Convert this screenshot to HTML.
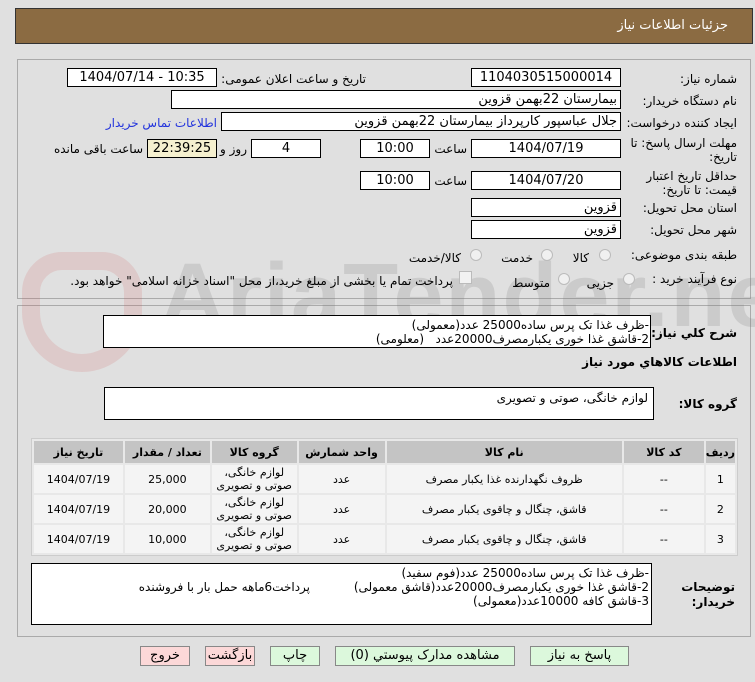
<!DOCTYPE html>
<html><head><meta charset="utf-8"><style>
*{box-sizing:border-box;margin:0;padding:0}
body{width:755px;height:682px;background:#e0e0e0;font-family:"DejaVu Sans","Liberation Sans",sans-serif;font-size:12px;color:#000;position:relative;overflow:hidden}
.a{position:absolute;white-space:nowrap}
.f{position:absolute;background:#fff;border:1px solid #000;height:19px;line-height:17px;text-align:center;font-size:13px}
.fr{text-align:right;padding-right:3px}
.l{position:absolute;white-space:nowrap;direction:rtl;text-align:right}
.rad{position:absolute;width:12px;height:12px;border-radius:50%;border:1px solid #bbb;background:#f0f0f0}
table{position:absolute;border-collapse:separate;border-spacing:2px;background:#e8e8e8;border:1px solid #ccc}
td{background:#f4f4f4;text-align:center;font-size:11px;direction:rtl;height:28px}
th{background:#c4c4c4;font-size:11px;height:22px;direction:rtl}
.btn{position:absolute;top:646px;height:20px;border:1px solid #888;font-size:13px;text-align:center;line-height:18px;direction:rtl}
</style></head><body>
<div class="a" style="left:15px;top:8px;width:738px;height:36px;background:#8b6b42;border:1px solid #333"></div>
<div class="l" style="right:27px;top:18px;color:#fff;font-size:13px">جزئیات اطلاعات نیاز</div>
<div class="a" style="left:17px;top:59px;width:734px;height:240px;border:1px solid #aaa"></div>
<div class="a" style="left:17px;top:305px;width:734px;height:332px;border:1px solid #aaa"></div>
<div class="a" style="left:160px;top:245px;font-size:90px;font-weight:bold;color:rgba(120,120,120,.2);font-family:'Liberation Sans',sans-serif;letter-spacing:2px">AriaTender.net</div>
<div class="a" style="left:22px;top:252px;width:120px;height:120px;border:18px solid rgba(210,80,80,.15);border-radius:40px 40px 60px 60px"></div>

<div class="l" style="right:18px;top:72px">شماره نیاز:</div>
<div class="f" style="left:471px;top:68px;width:150px">1104030515000014</div>
<div class="l" style="right:389px;top:72px">تاریخ و ساعت اعلان عمومی:</div>
<div class="f" style="left:67px;top:68px;width:150px">1404/07/14 - 10:35</div>
<div class="l" style="right:18px;top:94px">نام دستگاه خریدار:</div>
<div class="f fr" style="left:171px;top:90px;width:450px;direction:rtl">بیمارستان 22بهمن قزوین</div>
<div class="l" style="right:18px;top:116px">ایجاد کننده درخواست:</div>
<div class="f fr" style="left:221px;top:112px;width:400px;direction:rtl">جلال عباسپور کارپرداز بیمارستان 22بهمن قزوین</div>
<div class="l" style="right:538px;top:116px;color:#2233dd">اطلاعات تماس خریدار</div>
<div class="l" style="right:18px;top:136px;line-height:14px">مهلت ارسال پاسخ: تا<br>تاریخ:</div>
<div class="f" style="left:471px;top:139px;width:150px">1404/07/19</div>
<div class="l" style="right:288px;top:142px">ساعت</div>
<div class="f" style="left:360px;top:139px;width:70px">10:00</div>
<div class="f" style="left:251px;top:139px;width:70px">4</div>
<div class="l" style="right:508px;top:142px">روز و</div>
<div class="f" style="left:147px;top:139px;width:70px;background:#f5f0cf">22:39:25</div>
<div class="l" style="right:612px;top:142px">ساعت باقی مانده</div>
<div class="l" style="right:18px;top:169px;line-height:14px">حداقل تاریخ اعتبار<br>قیمت: تا تاریخ:</div>
<div class="f" style="left:471px;top:171px;width:150px">1404/07/20</div>
<div class="l" style="right:288px;top:174px">ساعت</div>
<div class="f" style="left:360px;top:171px;width:70px">10:00</div>
<div class="l" style="right:18px;top:201px">استان محل تحویل:</div>
<div class="f fr" style="left:471px;top:198px;width:150px;direction:rtl">قزوین</div>
<div class="l" style="right:18px;top:223px">شهر محل تحویل:</div>
<div class="f fr" style="left:471px;top:220px;width:150px;direction:rtl">قزوین</div>
<div class="l" style="right:18px;top:248px">طبقه بندی موضوعی:</div>
<div class="rad" style="left:599px;top:249px"></div><div class="l" style="right:166px;top:251px">کالا</div>
<div class="rad" style="left:541px;top:249px"></div><div class="l" style="right:222px;top:251px">خدمت</div>
<div class="rad" style="left:470px;top:249px"></div><div class="l" style="right:294px;top:251px">کالا/خدمت</div>
<div class="l" style="right:18px;top:272px">نوع فرآیند خرید :</div>
<div class="rad" style="left:623px;top:273px"></div><div class="l" style="right:141px;top:276px">جزیی</div>
<div class="rad" style="left:558px;top:273px"></div><div class="l" style="right:205px;top:276px">متوسط</div>
<div class="a" style="left:459px;top:271px;width:13px;height:13px;border:1px solid #bbb;background:#f2f2f2"></div>
<div class="l" style="right:302px;top:274px">پرداخت تمام یا بخشی از مبلغ خرید،از محل "اسناد خزانه اسلامی" خواهد بود.</div>

<div class="l" style="right:18px;top:326px;font-weight:bold">شرح کلي نیاز:</div>
<div class="a" style="left:103px;top:315px;width:548px;height:33px;background:#fff;border:1px solid #000"></div>
<div class="l" style="right:106px;top:318px;line-height:14px;font-size:12px">-ظرف غذا تک پرس ساده25000 عدد(معمولی)<br>2-قاشق غذا خوری یکبارمصرف20000عدد&nbsp;&nbsp;&nbsp;(معلومی)</div>
<div class="l" style="right:18px;top:355px;font-weight:bold">اطلاعات کالاهاي مورد نیاز</div>
<div class="l" style="right:18px;top:397px;font-weight:bold">گروه کالا:</div>
<div class="a" style="left:104px;top:387px;width:550px;height:33px;background:#fff;border:1px solid #000"></div>
<div class="l" style="right:107px;top:391px">لوازم خانگی، صوتی و تصویری</div>

<table style="left:31px;top:438px;width:707px">
<tr><th style="width:89px">تاریخ نیاز</th><th style="width:85px">تعداد / مقدار</th><th style="width:85px">گروه کالا</th><th style="width:86px">واحد شمارش</th><th style="width:236px">نام کالا</th><th style="width:80px">کد کالا</th><th>ردیف</th></tr>
<tr><td>1404/07/19</td><td>25,000</td><td style="line-height:13px">لوازم خانگی،<br>صوتی و تصویری</td><td>عدد</td><td>ظروف نگهدارنده غذا یکبار مصرف</td><td>--</td><td>1</td></tr>
<tr><td>1404/07/19</td><td>20,000</td><td style="line-height:13px">لوازم خانگی،<br>صوتی و تصویری</td><td>عدد</td><td>قاشق، چنگال و چاقوی یکبار مصرف</td><td>--</td><td>2</td></tr>
<tr><td>1404/07/19</td><td>10,000</td><td style="line-height:13px">لوازم خانگی،<br>صوتی و تصویری</td><td>عدد</td><td>قاشق، چنگال و چاقوی یکبار مصرف</td><td>--</td><td>3</td></tr>
</table>

<div class="l" style="right:20px;top:580px;font-weight:bold;line-height:15px">توضیحات<br>خریدار:</div>
<div class="a" style="left:31px;top:563px;width:621px;height:62px;background:#fff;border:1px solid #000"></div>
<div class="l" style="right:106px;top:566px;line-height:14px">-ظرف غذا تک پرس ساده25000 عدد(فوم سفید)<br>2-قاشق غذا خوری یکبارمصرف20000عدد(قاشق معمولی)<br>3-قاشق کافه 10000عدد(معمولی)</div>
<div class="l" style="right:445px;top:580px">پرداخت6ماهه حمل بار با فروشنده</div>

<div class="btn" style="left:140px;width:50px;background:#fcd8d8">خروج</div>
<div class="btn" style="left:205px;width:50px;background:#fcd8d8">بازگشت</div>
<div class="btn" style="left:270px;width:50px;background:#dcf8dc">چاپ</div>
<div class="btn" style="left:335px;width:180px;background:#dcf8dc">مشاهده مدارک پیوستي (0)</div>
<div class="btn" style="left:530px;width:99px;background:#dcf8dc">پاسخ به نیاز</div>
</body></html>
